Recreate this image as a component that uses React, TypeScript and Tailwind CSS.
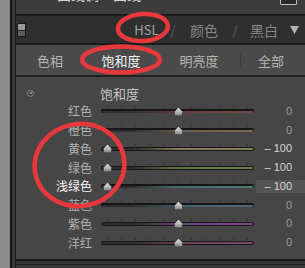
import React from "react";

type Row = {
  label: string;
  value: string;
  neg: boolean;
  active?: boolean;
  track: string;
};

const rows: Row[] = [
  { label: "红色", value: "0", neg: false, track: "bg-[linear-gradient(to_right,#2e2e2e_20%,#6a3c3e_55%,#7a4446)]" },
  { label: "橙色", value: "0", neg: false, track: "bg-[linear-gradient(to_right,#2e2e2e_20%,#6e604e_55%,#7a6a55)]" },
  { label: "黄色", value: "– 100", neg: true, track: "bg-[linear-gradient(to_right,#2e2e2e_20%,#7e7858_50%,#8a8460)]" },
  { label: "绿色", value: "– 100", neg: true, track: "bg-[linear-gradient(to_right,#2e2e2e_20%,#5e7248_50%,#6a7f50)]" },
  { label: "浅绿色", value: "– 100", neg: true, active: true, track: "bg-[linear-gradient(to_right,#2e2e2e_20%,#466c6a_50%,#4e7a78)]" },
  { label: "蓝色", value: "0", neg: false, track: "bg-[linear-gradient(to_right,#2e2e2e_20%,#44606e_55%,#4a6a7c)]" },
  { label: "紫色", value: "0", neg: false, track: "bg-[linear-gradient(to_right,#2e2e2e_20%,#6c4676_55%,#7a4a86)]" },
  { label: "洋红", value: "0", neg: false, track: "bg-[linear-gradient(to_right,#2e2e2e_20%,#6c4258_55%,#7a4866)]" },
];

const ticks = Array.from({ length: 11 }, (_, i) => i);

function Thumb() {
  return (
    <svg width="9" height="9" viewBox="0 0 9 9">
      <defs>
        <linearGradient id="tg" x1="0" y1="0" x2="0" y2="1">
          <stop offset="0" stopColor="#e2e2e2" />
          <stop offset="0.55" stopColor="#b8b8b8" />
          <stop offset="1" stopColor="#7c7c7c" />
        </linearGradient>
      </defs>
      <path
        d="M4.5 0.3 L8.5 4.6 L8.5 7.8 Q8.5 8.8 7.5 8.8 L1.5 8.8 Q0.5 8.8 0.5 7.8 L0.5 4.6 Z"
        fill="url(#tg)"
        stroke="#2a2a2a"
        strokeWidth="0.5"
      />
    </svg>
  );
}

function SliderRow({ row }: { row: Row }) {
  return (
    <div className="flex h-[18.75px] items-center">
      <div
        className={
          row.active
            ? "w-[76px] text-right text-[12px] leading-none text-[#f4f4f4]"
            : "w-[76px] text-right text-[12px] leading-none text-[#b2b2b2]"
        }
      >
        {row.label}
      </div>
      <div className="relative ml-[9px] flex w-[153px] flex-col">
        <div className="flex h-[2px] justify-between px-[6px]">
          {ticks.map((t) => (
            <div key={t} className="h-[2px] w-[1px] bg-[#343434]" />
          ))}
        </div>
        <div className="h-[1px]" />
        <div className="h-[4px] rounded-full bg-[#161616] px-[1px] pt-[1.5px]">
          <div className={`h-[2px] rounded-full ${row.track}`} />
        </div>
        <div className="h-[3px]" />
        <div
          className={
            row.neg
              ? "absolute left-[1.5px] top-[0.5px]"
              : "absolute left-[72.5px] top-[0.5px]"
          }
        >
          <Thumb />
        </div>
      </div>
      <div className="ml-[2px] flex flex-1 justify-end">
        <div
          className={
            row.active
              ? "flex h-[13px] w-full items-center justify-end bg-[#545454] pr-[13px] font-['Liberation_Sans',sans-serif] text-[11px] leading-none text-[#d6d6d6]"
              : row.neg
              ? "flex h-[13px] w-full items-center justify-end pr-[13px] font-['Liberation_Sans',sans-serif] text-[11px] leading-none text-[#d6d6d6]"
              : "flex h-[13px] w-full items-center justify-end pr-[13px] font-['Liberation_Sans',sans-serif] text-[11px] leading-none text-[#9c9c9c]"
          }
        >
          {row.value}
        </div>
      </div>
    </div>
  );
}

export default function App() {
  return (
    <div className="relative flex h-[268px] w-[305px] overflow-hidden bg-[#8a8a8a] font-['Noto_Sans_CJK_SC','Noto_Sans',sans-serif]">
      <div className="w-[10px] shrink-0" />
      <div className="w-[2px] shrink-0 bg-[#121212]" />
      <div className="w-[3px] shrink-0 bg-[#383838]" />
      <div className="w-[1px] shrink-0 bg-[#1a1a1a]" />
      <div className="flex flex-1 flex-col">
        {/* top strip (cut off panel above) */}
        <div className="relative flex h-[14px] items-start overflow-hidden bg-[#3c3c3c]">
          <span className="ml-[41px] mt-[-13px] text-[14px] leading-none text-[#d4d4d4]">曲线调</span>
          <span className="ml-[14px] mt-[-13px] text-[14px] leading-none text-[#d4d4d4]">曲线</span>
          <div className="ml-auto mr-[8px] mt-[-2px] h-[7px] w-[17px] rounded-b-[1px] border border-[#bdbdbd] bg-[#2a2a2a]" />
        </div>
        <div className="h-[2px] bg-[#1b1b1b]" />
        {/* header */}
        <div className="flex h-[27px] items-center bg-[#2f2f2f]">
          <div className="ml-[1px] flex h-[14px] w-[9px] flex-col overflow-hidden rounded-[1px] border border-[#161616]">
            <div className="h-[6px] bg-[#9a9a9a]" />
            <div className="h-[1px] bg-[#222]" />
            <div className="flex-1 bg-[#5c5c5c]" />
          </div>
          <div className="w-[104px]" />
          <span className="w-[33px] text-center text-[13px] leading-none text-[#a6a6a6]">HSL</span>
          <span className="w-[20px] text-center text-[13px] leading-none text-[#5e5e5e]">/</span>
          <span className="w-[42px] text-center text-[14px] leading-none text-[#868686]">颜色</span>
          <span className="w-[20px] text-center text-[13px] leading-none text-[#5e5e5e]">/</span>
          <span className="w-[38px] text-center text-[14px] leading-none text-[#868686]">黑白</span>
          <span className="flex w-[22px] justify-center">
            <svg width="9" height="8" viewBox="0 0 9 8">
              <path d="M0 0 L9 0 L4.5 8 Z" fill="#b4b4b4" />
            </svg>
          </span>
        </div>
        <div className="h-[2px] bg-[#1b1b1b]" />
        {/* tabs */}
        <div className="flex h-[30px] items-center bg-[#4a4a4a] text-[13px] leading-none">
          <span className="w-[68px] text-center text-[#b4b4b4]">色相</span>
          <span className="w-[74px] text-center text-[#f6f6f6]">饱和度</span>
          <span className="w-[82px] text-center text-[#b4b4b4]">明亮度</span>
          <span className="h-[12px] w-[1px] bg-[#3a3a3a]" />
          <span className="w-[60px] text-center text-[#b4b4b4]">全部</span>
        </div>
        <div className="h-[2px] bg-[#222222]" />
        {/* content */}
        <div className="flex h-[182px] flex-col bg-[#464646] pt-[7px]">
          <div className="flex h-[18px] items-center">
            <div className="ml-[11px] flex h-[7px] w-[7px] items-center justify-center rounded-full border border-[#8a8a8a]">
              <div className="h-[2px] w-[2px] rounded-full bg-[#9a9a9a]" />
            </div>
            <span className="ml-[66px] text-[13px] leading-none text-[#c4c4c4]">饱和度</span>
          </div>
          {rows.map((r) => (
            <SliderRow key={r.label} row={r} />
          ))}
        </div>
        <div className="h-[2px] bg-[#1a1a1a]" />
        <div className="h-[3px] bg-[#343434]" />
        <div className="h-[1px] bg-[#1a1a1a]" />
        <div className="flex-1 bg-[#3a3a3a]" />
      </div>

      {/* red hand-drawn annotations */}
      <svg
        className="pointer-events-none absolute inset-0"
        width="305"
        height="268"
        viewBox="0 0 305 268"
      >
        <ellipse cx="143" cy="27.5" rx="25" ry="13.5" fill="none" stroke="#e8383c" strokeWidth="4.5" transform="rotate(-4 143 27.5)" />
        <ellipse cx="121" cy="59.5" rx="39" ry="13" fill="none" stroke="#e8383c" strokeWidth="4.5" />
        <ellipse cx="79.5" cy="165" rx="45" ry="41" fill="none" stroke="#e8383c" strokeWidth="4.5" transform="rotate(-10 79.5 165)" />
      </svg>
    </div>
  );
}
